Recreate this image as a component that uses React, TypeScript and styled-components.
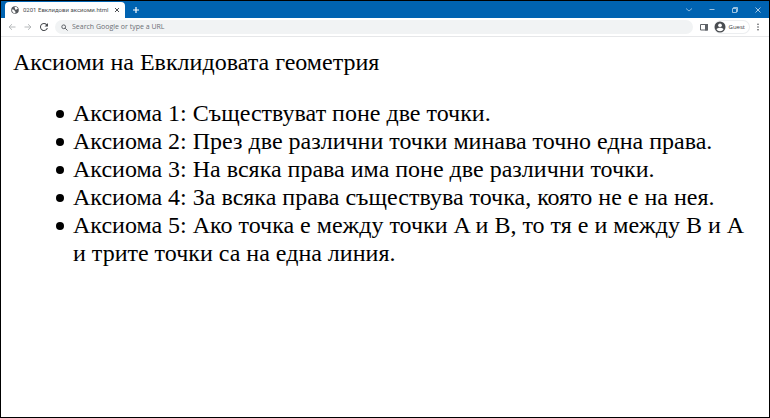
import React from "react";
import styled, { createGlobalStyle } from "styled-components";

const GlobalStyle = createGlobalStyle`
  * { box-sizing: border-box; }
  body { margin: 0; background: #fff; }
  svg { flex: none; }
`;

const Window = styled.div`
  min-height: 100vh;
  border: 1px solid #000;
  background: #fff;
`;

const TabStrip = styled.header`
  display: flex;
  align-items: flex-end;
  height: 17px;
  padding-left: 4px;
  background: #0063b1;
`;

const Tab = styled.div`
  display: flex;
  align-items: center;
  gap: 4px;
  width: 120px;
  height: 16px;
  padding: 0 5px 0 6px;
  border-radius: 4px 4px 0 0;
  background: #fff;
  color: #4a4d51;
`;

const TabTitle = styled.span`
  flex: 1;
  white-space: nowrap;
  font: 6px/12px Roboto, "Noto Sans", sans-serif;
`;

const IconButton = styled.button<{ $color?: string; $width?: number }>`
  display: flex;
  align-items: center;
  justify-content: center;
  flex: none;
  width: ${(p) => p.$width ?? 12}px;
  height: 16px;
  padding: 0;
  border: 0;
  background: none;
  color: ${(p) => p.$color ?? "#4a4d51"};
`;

const WindowControls = styled.div`
  display: flex;
  margin-left: auto;
`;

const Toolbar = styled.nav`
  display: flex;
  align-items: center;
  height: 19px;
  padding: 0 5px 0 3px;
  border-bottom: 1px solid #e6e7e9;
  background: #fff;
`;

const Omnibox = styled.label`
  display: flex;
  flex: 1;
  align-items: center;
  gap: 4px;
  height: 14px;
  margin: 0 3px;
  padding: 0 6px;
  border-radius: 7px;
  background: #f1f3f4;
  color: #5f6368;
`;

const AddressInput = styled.input`
  flex: 1;
  min-width: 0;
  height: 12px;
  padding: 0;
  border: 0;
  outline: 0;
  background: none;
  color: #5f6368;
  font: 7px/12px "Open Sans", "Noto Sans", sans-serif;
  &::placeholder { color: #6b6f74; opacity: 1; }
`;

const Profile = styled.button`
  display: flex;
  align-items: center;
  gap: 3px;
  height: 14px;
  margin-left: 2px;
  padding: 0 4px 0 0;
  border: 1px solid #eceef0;
  border-left: 0;
  border-radius: 7px;
  background: #fff;
  color: #3c4043;
  font: 6px/12px "Open Sans", "Noto Sans", sans-serif;
`;

const MenuButton = styled(IconButton)`
  margin-left: 2px;
`;

const Page = styled.main`
  padding: 11px 12px;
  color: #000;
  font: 24px/28px "Liberation Serif", "Times New Roman", serif;
`;

const Heading = styled.p`
  margin: 0;
`;

const AxiomList = styled.ul`
  margin: 23px 0 0;
  padding-left: 43px;
  list-style: none;
`;

const Axiom = styled.li`
  display: grid;
  grid-template-columns: 8px 1fr;
  column-gap: 9px;

  &::before {
    content: "";
    width: 8px;
    height: 8px;
    margin-top: 11px;
    border-radius: 50%;
    background: currentColor;
  }
`;

const Globe = () => (
  <svg width="8" height="8" viewBox="0 0 16 16" aria-hidden="true">
    <circle cx="8" cy="8" r="7.6" fill="#55585c" />
    <path d="M2 7c3 0 5 0 5 2s2 1 2 3-1 2-1 2.500C4 14.500 2 11 2 7zM8 2c3-.5 5 1 5.700 3-1 1.500-2 1-2.700 2-1 1-3 0-3-1.500S6 4 8 2z" fill="#fff" />
  </svg>
);

const Line = ({ d, size = 8, width = 1 }: { d: string; size?: number; width?: number }) => (
  <svg width={size} height={size} viewBox={`0 0 ${size} ${size}`} fill="none" stroke="currentColor" strokeWidth={width} aria-hidden="true">
    <path d={d} />
  </svg>
);

const Reload = () => (
  <svg width="8" height="8" viewBox="4 4 16 16" aria-hidden="true">
    <path fill="currentColor" d="M17.650 6.350A8 8 0 1 0 19.730 14h-2.080A6 6 0 1 1 12 6c1.660 0 3.140.690 4.220 1.780L13 11h7V4l-2.350 2.350z" />
  </svg>
);

const Avatar = () => (
  <svg width="12" height="12" viewBox="0 0 24 24" aria-hidden="true">
    <circle cx="12" cy="12" r="11" fill="#4a4d51" />
    <circle cx="12" cy="8.500" r="3.700" fill="#fff" />
    <path d="M5 16.500c2-4 12-4 14 0-2 5-12 5-14 0z" fill="#fff" />
  </svg>
);

const axioms = [
  "Съществуват поне две точки.",
  "През две различни точки минава точно една права.",
  "На всяка права има поне две различни точки.",
  "За всяка права съществува точка, която не е на нея.",
  "Ако точка е между точки A и B, то тя е и между B и A и трите точки са на една линия.",
];

export default function App() {
  return (
    <Window>
      <GlobalStyle />
      <TabStrip>
        <Tab>
          <Globe />
          <TabTitle>0201 Евклидови аксиоми.html</TabTitle>
          <IconButton $width={6} aria-label="Close tab"><Line size={6} d="M1 1l4 4M5 1l-4 4" /></IconButton>
        </Tab>
        <IconButton $width={22} $color="#fff" aria-label="New tab"><Line d="M4 1v6M1 4h6" width={1.2} /></IconButton>
        <WindowControls>
          <IconButton $width={23} $color="#a9cdea" aria-label="Search tabs"><Line d="M1 2.500l3 2.500 3-2.500" width={0.8} /></IconButton>
          <IconButton $width={23} $color="#c3daee" aria-label="Minimize"><Line d="M1.500 3.500h5" width={0.8} /></IconButton>
          <IconButton $width={23} $color="#c3daee" aria-label="Restore"><Line d="M1.500 2.500h4v4h-4zM2.500 2.500v-1h4v4h-1" width={0.8} /></IconButton>
          <IconButton $width={23} $color="#d5e6f4" aria-label="Close"><Line d="M1.500 1.500l5 5M6.500 1.500l-5 5" width={0.8} /></IconButton>
        </WindowControls>
      </TabStrip>
      <Toolbar>
        <IconButton $width={16} $color="#a5a8ab" aria-label="Back"><Line d="M7.500 4h-6M4 1.200l-3 2.800 3 2.800" width={0.8} /></IconButton>
        <IconButton $width={16} $color="#a5a8ab" aria-label="Forward"><Line d="M.5 4h6M4 1.200l3 2.800-3 2.800" width={0.8} /></IconButton>
        <IconButton $width={16} aria-label="Reload"><Reload /></IconButton>
        <Omnibox>
          <Line size={7} d="M4.600 2.800a1.900 1.900 0 1 1-3.800 0a1.900 1.900 0 0 1 3.800 0M4.200 4.200l2.300 2.300" />
          <AddressInput aria-label="Address" placeholder="Search Google or type a URL" />
        </Omnibox>
        <IconButton $width={16} $color="#5f6368" aria-label="Side panel">
          <svg width="8" height="8" viewBox="0 0 8 8" aria-hidden="true">
            <path d="M.5 1.500h7v5.500h-7z" fill="none" stroke="currentColor" />
            <path d="M5 1h3v6.500H5z" fill="currentColor" />
          </svg>
        </IconButton>
        <Profile><Avatar />Guest</Profile>
        <MenuButton aria-label="Menu">
          <svg width="2" height="8" viewBox="0 0 2 8" fill="currentColor" aria-hidden="true">
            <circle cx="1" cy="1.200" r=".8" /><circle cx="1" cy="4" r=".8" /><circle cx="1" cy="6.800" r=".8" />
          </svg>
        </MenuButton>
      </Toolbar>
      <Page>
        <Heading>Аксиоми на Евклидовата геометрия</Heading>
        <AxiomList>
          {axioms.map((text, i) => (
            <Axiom key={text}>{`Аксиома ${i + 1}: ${text}`}</Axiom>
          ))}
        </AxiomList>
      </Page>
    </Window>
  );
}
